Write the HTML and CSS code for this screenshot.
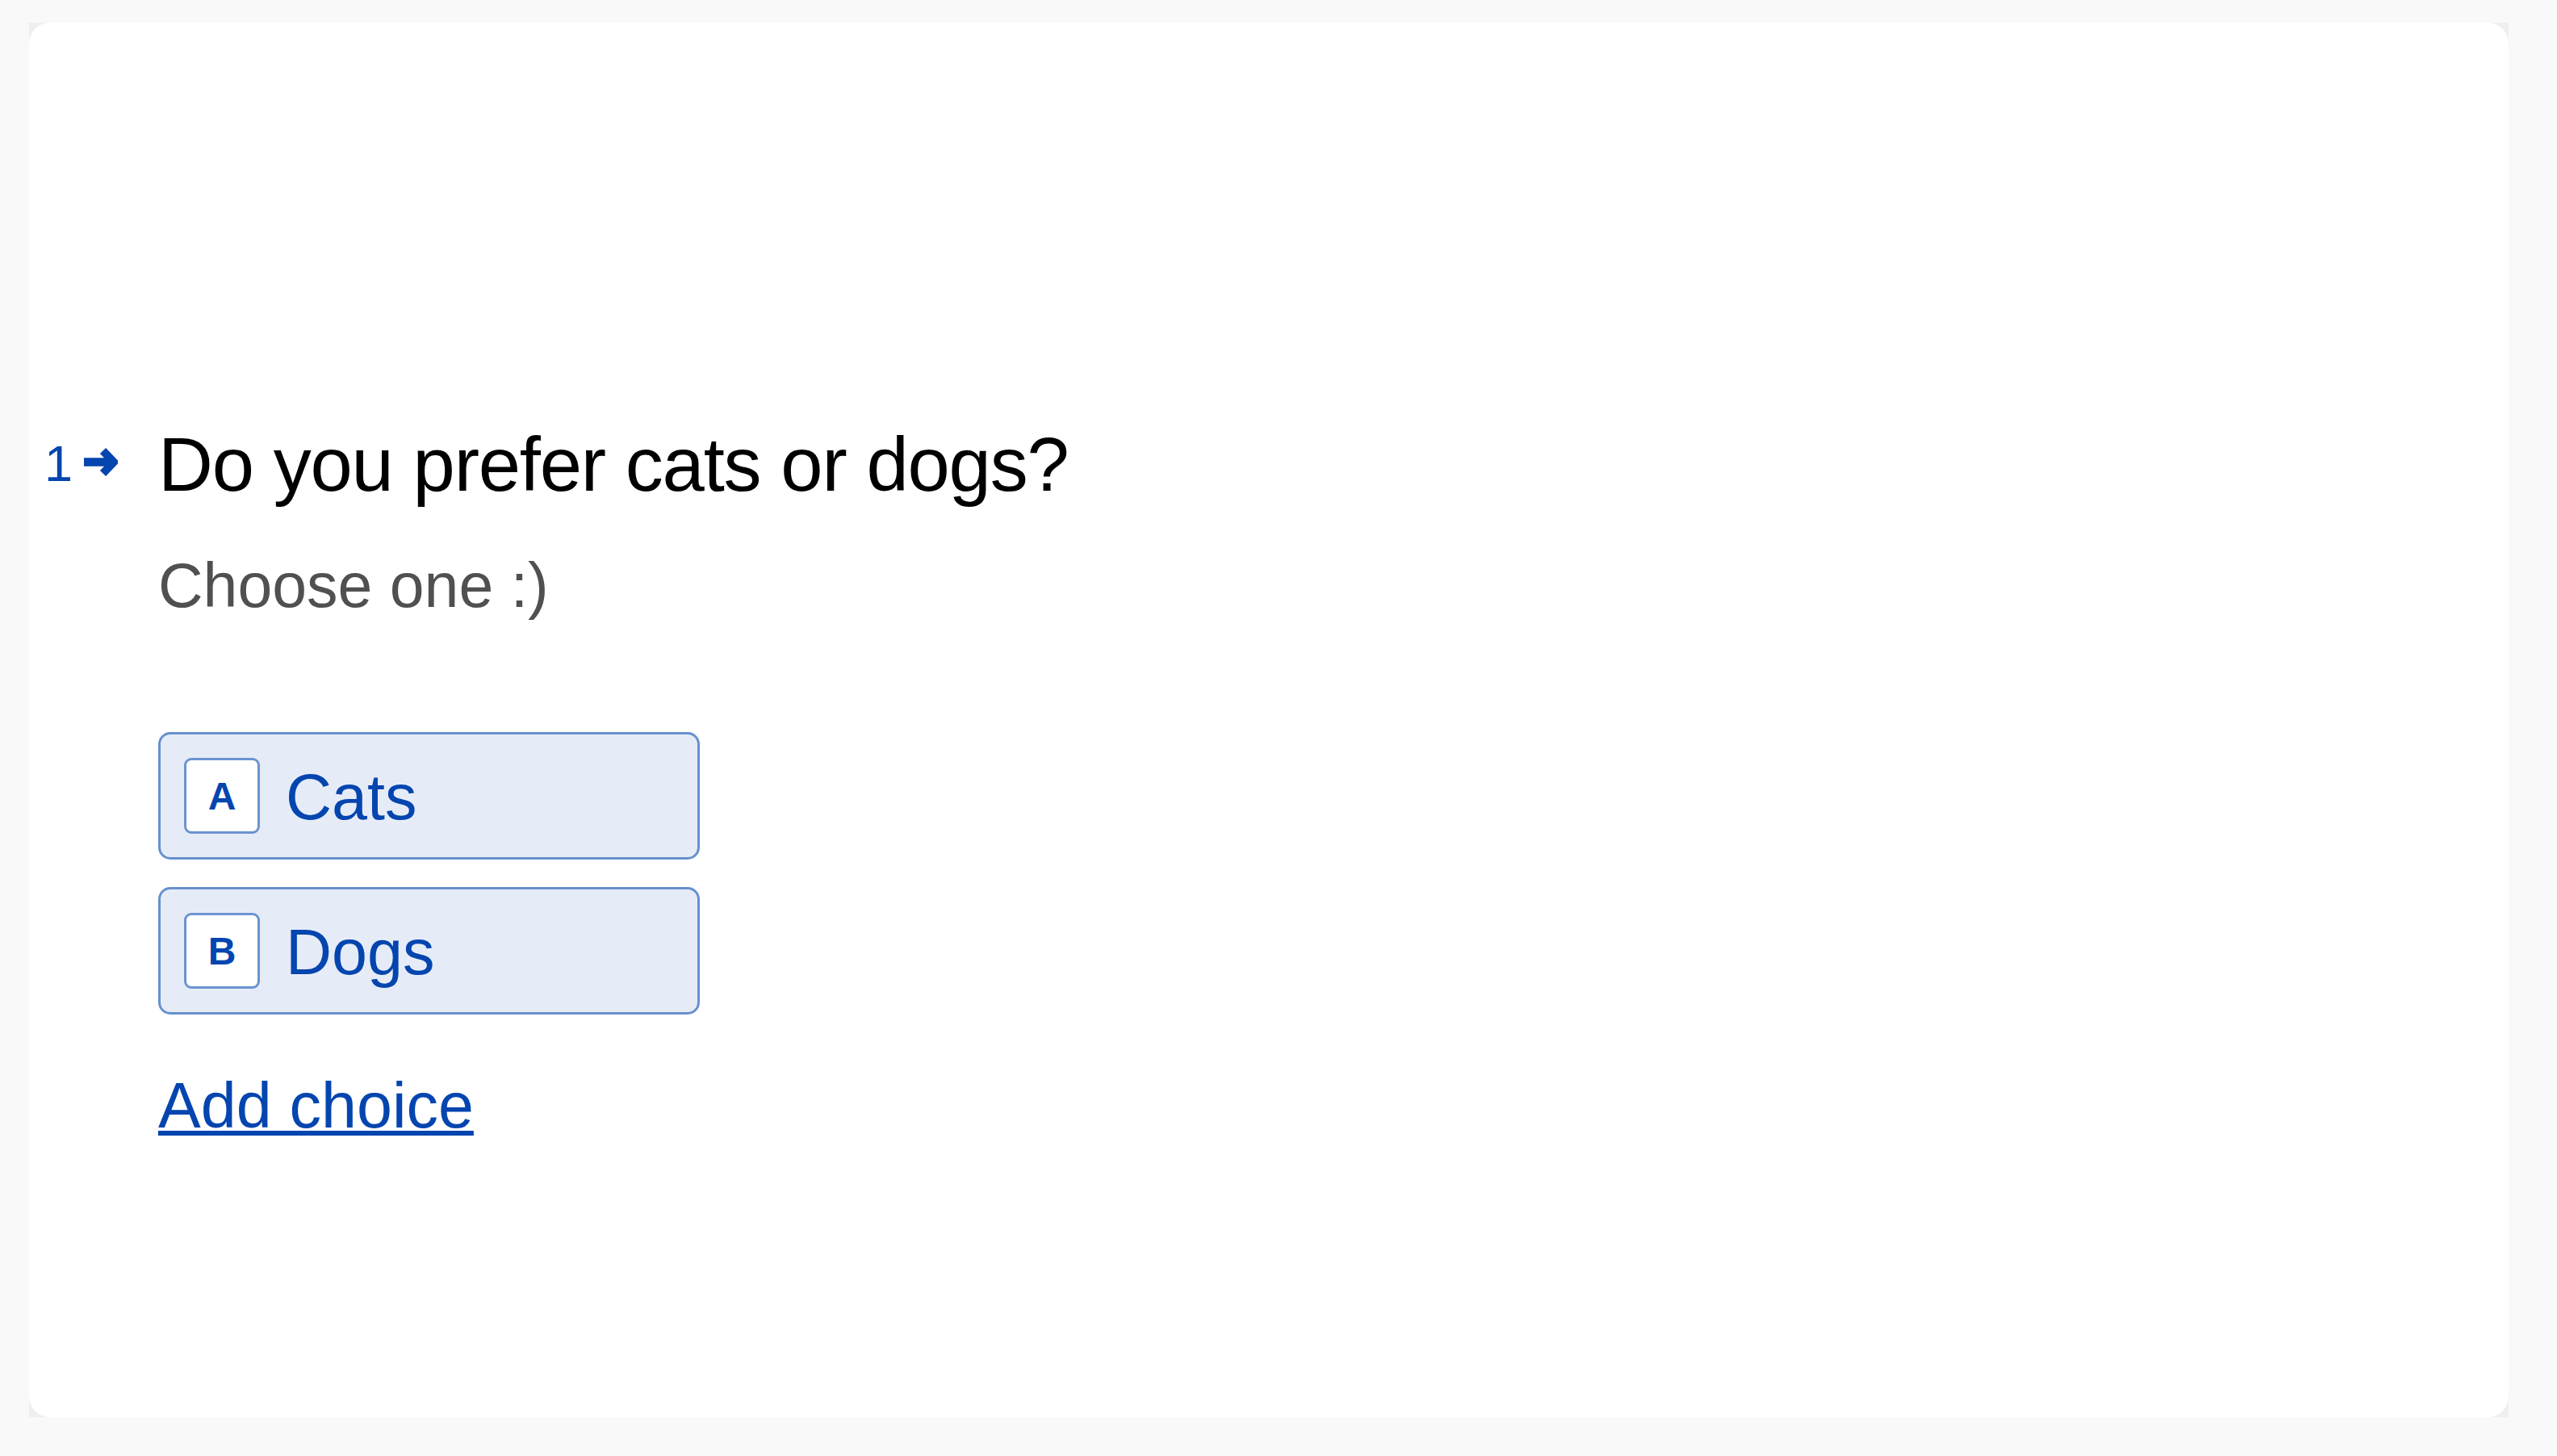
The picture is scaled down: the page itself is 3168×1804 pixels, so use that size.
FILE: index.html
```html
<!DOCTYPE html>
<html lang="en">
<head>
<meta charset="utf-8">
<title>Do you prefer cats or dogs?</title>
<link rel="stylesheet" href="styles.css">
</head>
<body>
<main class="page">
  <div class="frame">
    <section class="card">
      <div class="question">
        <div class="counter">
          <span class="num">1</span>
          <svg class="arrow" viewBox="0 0 42 37" width="42" height="37" aria-hidden="true">
            <path d="M0 18.5 H34" fill="none" stroke="#0445AF" stroke-width="10.5"/>
            <path d="M23.5 4.5 L37 18.5 L23.5 32.5" fill="none" stroke="#0445AF" stroke-width="10" stroke-linejoin="miter" stroke-miterlimit="4"/>
          </svg>
        </div>
        <div class="body">
          <h1 class="title">Do you prefer cats or dogs?</h1>
          <p class="desc">Choose one :)</p>
          <ul class="choices">
            <li class="choice"><span class="key">A</span><span class="label">Cats</span></li>
            <li class="choice"><span class="key">B</span><span class="label">Dogs</span></li>
          </ul>
          <a class="add" href="#">Add choice</a>
        </div>
      </div>
    </section>
  </div>
</main>
</body>
</html>
```

FILE: styles.css
```css
* {
  box-sizing: border-box;
}

html, body {
  margin: 0;
  padding: 0;
  background: #f9f9f9;
  font-family: "Liberation Sans", Arial, Helvetica, sans-serif;
}

.page {
  height: 1804px;
  padding: 28px 60px 48px 36px;
  display: flex;
}

.frame {
  flex: 1;
  display: flex;
  background: #efefef;
}

.card {
  flex: 1;
  background: #ffffff;
  border-radius: 26px;
  padding: 491px 0 0 19px;
}

.question {
  display: grid;
  grid-template-columns: 141px 1fr;
  align-items: start;
}

.counter {
  height: 114px;
  display: flex;
  align-items: center;
  color: #0445AF;
}

.num {
  font-size: 63px;
  line-height: 1;
  margin-bottom: 4px;
}

.arrow {
  display: block;
  margin-left: 14px;
  margin-bottom: 8px;
}

.body {
  display: flex;
  flex-direction: column;
  align-items: flex-start;
}

.title {
  margin: 0;
  font-size: 94px;
  line-height: 114px;
  font-weight: 400;
  letter-spacing: -1.2px;
  color: #000000;
}

.desc {
  margin: 42px 0 0;
  font-size: 77px;
  line-height: 1.3;
  color: #505050;
}

.choices {
  list-style: none;
  margin: 132px 0 0;
  padding: 0;
  display: flex;
  flex-direction: column;
  gap: 34px;
}

.choice {
  width: 671px;
  height: 158px;
  display: flex;
  align-items: center;
  padding: 0 29px;
  background: #e6ecf7;
  border: 3px solid #6890cf;
  border-radius: 15px;
  color: #0445AF;
}

.key {
  width: 94px;
  height: 94px;
  flex: none;
  display: flex;
  align-items: center;
  justify-content: center;
  background: #ffffff;
  border: 3px solid #6b93d0;
  border-radius: 9px;
  font-size: 48px;
  font-weight: 700;
}

.label {
  margin-left: 32px;
  margin-top: 4px;
  font-size: 79px;
}

.add {
  margin-top: 62px;
  font-size: 79px;
  line-height: 1.3;
  color: #0445AF;
  text-decoration: underline;
  text-decoration-thickness: 6px;
  text-underline-offset: 4px;
}
```
